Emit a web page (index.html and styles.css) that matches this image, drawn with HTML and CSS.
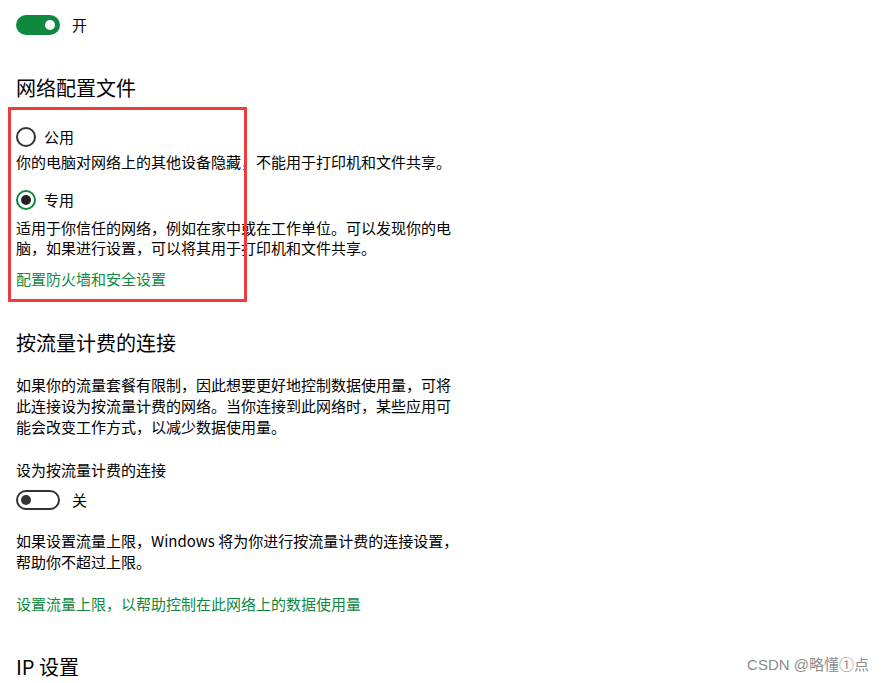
FILE: index.html
```html
<!DOCTYPE html>
<html lang="zh-CN">
<head>
  <meta charset="UTF-8" />
  <title>网络设置</title>
  <link rel="stylesheet" href="styles.css">
</head>
<body>
  <div class="page">
    <div class="toggle-row first">
      <span class="toggle on"><span class="knob"></span></span>
      <span class="toggle-label">开</span>
    </div>

    <h2 class="section-title profile-title">网络配置文件</h2>
    <div class="radio-row public-row">
      <span class="radio"></span>
      <span class="radio-label">公用</span>
    </div>
    <p class="desc public-desc">你的电脑对网络上的其他设备隐藏，不能用于打印机和文件共享。</p>
    <div class="radio-row private-row">
      <span class="radio checked"><span class="dot"></span></span>
      <span class="radio-label">专用</span>
    </div>
    <p class="desc private-desc">适用于你信任的网络，例如在家中或在工作单位。可以发现你的电脑，如果进行设置，可以将其用于打印机和文件共享。</p>
    <a class="link firewall-link" href="#">配置防火墙和安全设置</a>

    <h2 class="section-title metered-title">按流量计费的连接</h2>
    <p class="para metered-desc">如果你的流量套餐有限制，因此想要更好地控制数据使用量，可将此连接设为按流量计费的网络。当你连接到此网络时，某些应用可能会改变工作方式，以减少数据使用量。</p>
    <div class="field-label">设为按流量计费的连接</div>
    <div class="toggle-row metered-toggle">
      <span class="toggle off"><span class="knob"></span></span>
      <span class="toggle-label">关</span>
    </div>
    <p class="para limit-desc">如果设置流量上限，Windows 将为你进行按流量计费的连接设置，帮助你不超过上限。</p>
    <a class="link limit-link" href="#">设置流量上限，以帮助控制在此网络上的数据使用量</a>

    <h2 class="section-title ip-title">IP 设置</h2>
  </div>

  <div class="highlight"></div>
  <div class="watermark">CSDN @略懂①点</div>
</body>
</html>
```

FILE: styles.css
```css
html, body {
  margin: 0;
  padding: 0;
  overflow: hidden;
}
body {
  background: #fff;
  color: #000;
  font-family: "Noto Sans CJK SC", "Noto Sans", sans-serif;
  font-size: 15px;
  position: relative;
  height: 683px;
}
.page {
  padding: 0 16px;
  width: 448px;
}
.page > * {
  display: block;
  margin: 0;
}

/* toggles */
.toggle-row {
  display: flex;
  align-items: center;
  height: 20px;
}
.toggle-row.first { margin-top: 15px; }
.toggle {
  box-sizing: border-box;
  width: 44px;
  height: 20px;
  border-radius: 10px;
  display: flex;
  align-items: center;
  padding: 0 5px;
}
.toggle .knob {
  width: 10px;
  height: 10px;
  border-radius: 50%;
}
.toggle.on {
  background: #10893e;
  justify-content: flex-end;
}
.toggle.on .knob { background: #fff; }
.toggle.off {
  border: 2px solid #333;
  padding: 0 3px;
}
.toggle.off .knob { background: #333; }
.toggle-label {
  margin-left: 12px;
  line-height: 20px;
}

/* headings */
.section-title {
  font-size: 20px;
  font-weight: normal;
  line-height: 28px;
}
.profile-title { margin-top: 39px !important; }
.metered-title { margin-top: 40px !important; }
.ip-title { margin-top: 39px !important; }

/* radios */
.radio-row {
  display: flex;
  align-items: center;
  height: 20px;
}
.radio {
  box-sizing: border-box;
  width: 20px;
  height: 20px;
  border: 2px solid #333;
  border-radius: 50%;
  display: flex;
  align-items: center;
  justify-content: center;
}
.radio.checked { border-color: #10893e; }
.radio .dot {
  width: 10px;
  height: 10px;
  border-radius: 50%;
  background: #222;
}
.radio-label {
  margin-left: 8px;
  line-height: 20px;
}
.public-row { margin-top: 25px !important; }
.private-row { margin-top: 18px !important; }

.desc { line-height: 20px; }
.public-desc { margin-top: 5px !important; }
.private-desc { margin-top: 8px !important; }

.link {
  color: #10893e;
  text-decoration: none;
  line-height: 20px;
}
.firewall-link { margin-top: 11px !important; }
.limit-link { margin-top: 22px !important; }

.para { line-height: 21px; }
.metered-desc { margin-top: 17px !important; }
.field-label {
  line-height: 20px;
  margin-top: 23px !important;
}
.metered-toggle { margin-top: 10px !important; }
.limit-desc { margin-top: 20px !important; }

/* annotation box drawn over the screenshot */
.highlight {
  position: absolute;
  left: 8px;
  top: 107px;
  width: 239px;
  height: 195px;
  box-sizing: border-box;
  border: 3px solid #ef3b3b;
  pointer-events: none;
}

.watermark {
  position: absolute;
  right: 15px;
  top: 655px;
  font-family: "Liberation Sans", "Noto Sans CJK SC", sans-serif;
  font-size: 15px;
  line-height: 20px;
  color: #8c8c8c;
}
```
